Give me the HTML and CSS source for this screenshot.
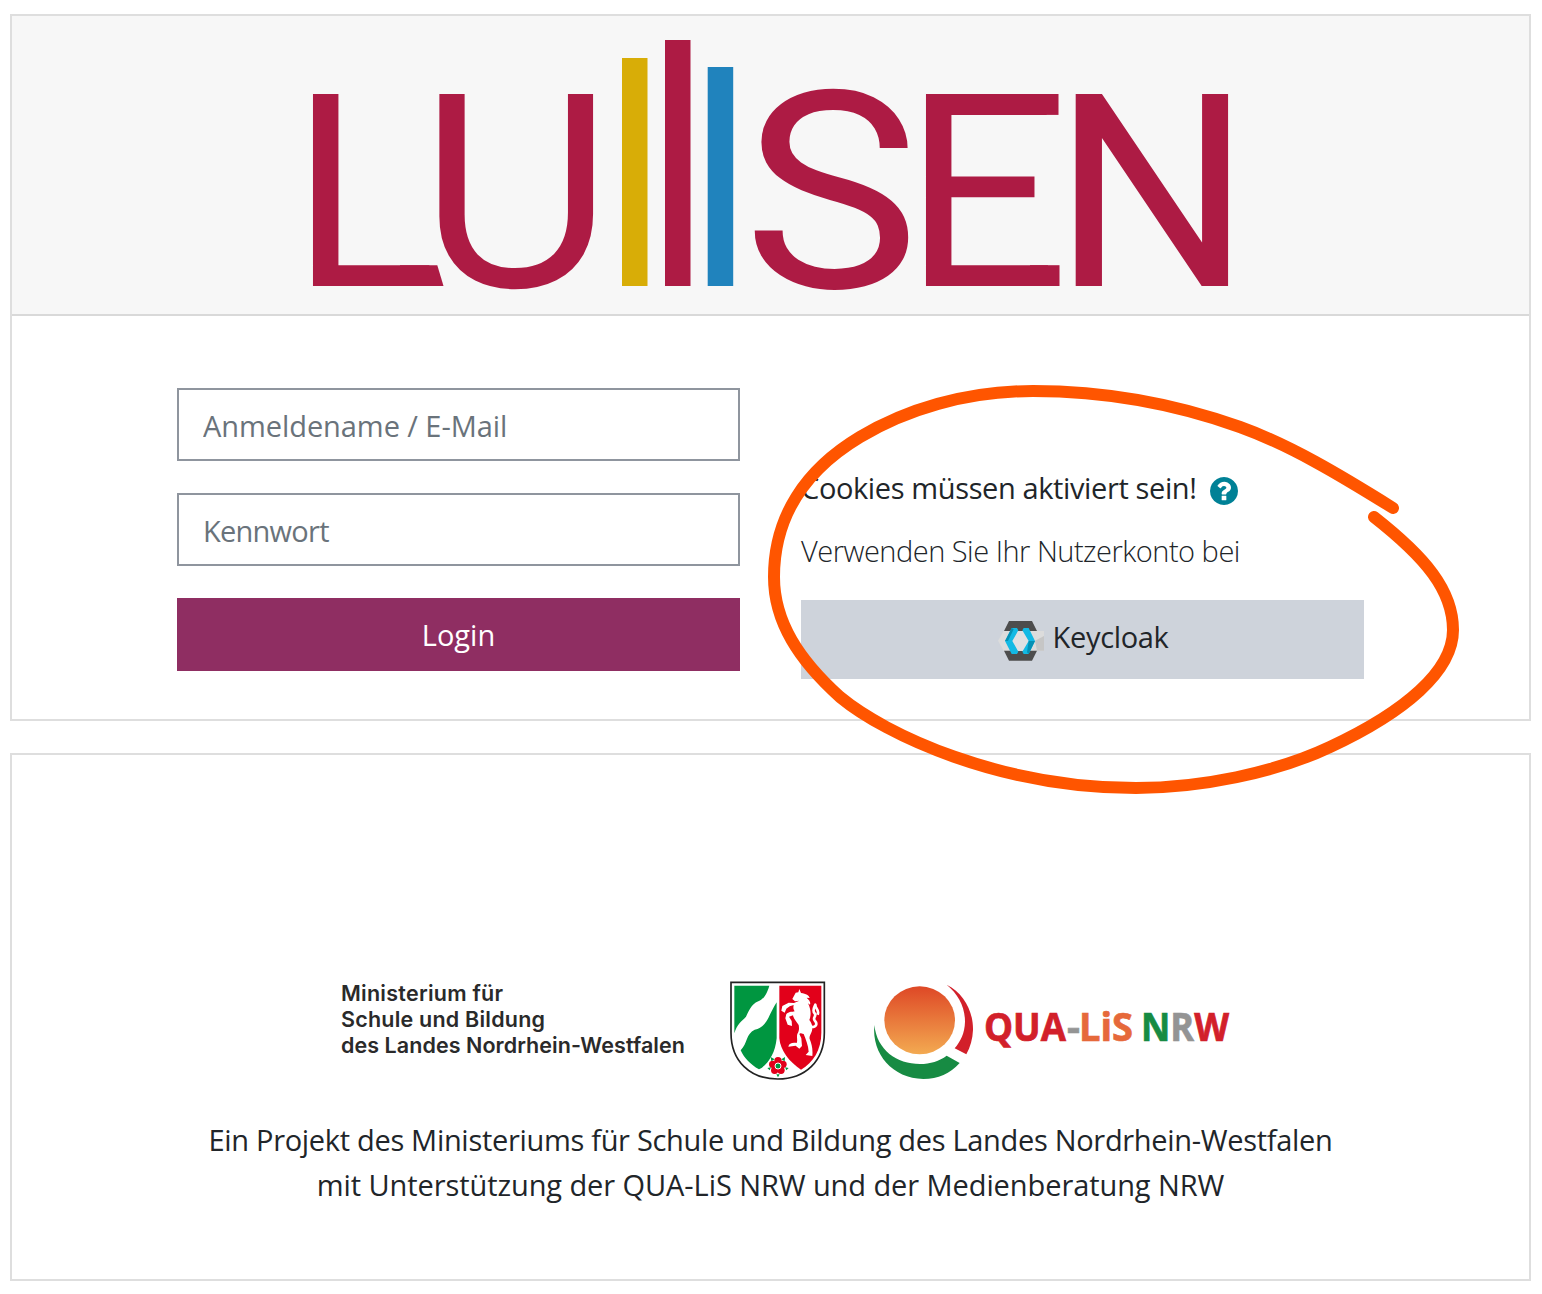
FILE: index.html
```html
<!DOCTYPE html>
<html lang="de">
<head>
<meta charset="utf-8">
<title>LUISEN Login</title>
<link rel="stylesheet" href="styles.css">
</head>
<body>
<main class="page">
  <section class="card login-card">
    <header class="card-header">
      <svg class="brand" viewBox="313 40 915 250" width="915" height="250" role="img" aria-label="Logo">
        <g class="brand-letters">
          <text transform="translate(290.7 286)">L</text>
          <text class="brand-u" transform="translate(418.5 286.500) scale(.97 1.003)">U</text>
          <text transform="translate(743 287.3) scale(1.1 1.02)">S</text>
          <text transform="translate(903.7 286)">E</text>
          <text transform="translate(1052.7 286) scale(1.032 1)">N</text>
        </g>
        <g fill="#ad1b44">
          <polygon points="400,265.2 437.300,265.200 443.5,286 400,286"/>
          <rect x="1030" y="94" width="28.500" height="20.900"/>
          <rect x="1030" y="265.200" width="29.500" height="20.800"/>
        </g>
        <rect x="622" y="58" width="25.5" height="228" fill="#d8ad07"/>
        <rect x="665" y="40" width="25.5" height="246" fill="#ad1b44"/>
        <rect x="707.7" y="67" width="25.5" height="219" fill="#2083bd"/>
      </svg>
    </header>
    <div class="login-body">
      <form class="login-form">
        <input class="field field-user" type="text" placeholder="Anmeldename / E-Mail">
        <input class="field field-pass" type="password" placeholder="Kennwort">
        <button class="btn btn-login" type="button"><span>Login</span></button>
      </form>
      <div class="login-side">
        <p class="cookies"><span class="cookies-text">Cookies müssen aktiviert sein!</span>
          <svg class="help" viewBox="128 128 1536 1536" width="28" height="28"><path d="M1024 1376v-192q0-14-9-23t-23-9h-192q-14 0-23 9t-9 23v192q0 14 9 23t23 9h192q14 0 23-9t9-23zM1280 704q0-88-55.500-163t-138.500-116-170-41q-243 0-371 213-15 24 8 42l132 100q7 6 19 6 16 0 25-12 53-68 86-92 34-24 86-24 48 0 85.500 26t37.500 59q0 38-20 61t-68 45q-63 28-115.500 86.500t-52.500 125.500v36q0 14 9 23t23 9h192q14 0 23-9t9-23q0-19 21.500-49.500t54.500-49.500q32-18 49-28.500t46-35 44.500-48 28-60.500 12.500-81zM1664 896q0 209-103 385.500t-279.500 279.500-385.500 103-385.500-103-279.500-279.500-103-385.500 103-385.500 279.500-279.500 385.500-103 385.500 103 279.500 279.500 103 385.500z"/></svg>
        </p>
        <h2 class="provider-title">Verwenden Sie Ihr Nutzerkonto bei</h2>
        <a class="btn btn-provider" href="#">
          <svg class="keycloak" viewBox="54 60 144 126" width="48" height="42">
            <path fill="#dcdcdc" d="M74 93H195V152H74L57 122Z"/>
            <path fill="#c6c6c6" d="M168 122L195 108V152H174Z"/>
            <path fill="#4d4d4d" d="M90 63H159L174 93H75ZM75 152H174L159 182H90Z"/>
            <path fill="#e0e0e2" d="M116 93H132L150 123 132 153H116L98 123Z"/>
            <path fill="#13b9e4" d="M98 84H114L118 91 100 123 118 155 114 162H98L78 123ZM134 84H149L168 123 149 162H134L130 155 149 123 130 91Z"/>
            <path fill="#0791b4" d="M78 123L98 84 104 88 87 123ZM168 123L149 162 144 157 149 123Z"/>
          </svg>
          <span class="provider-name">Keycloak</span>
        </a>
      </div>
    </div>
  </section>

  <section class="card footer-card">
    <div class="sponsors">
      <svg class="ministry" viewBox="340 980 348 80" width="348" height="80">
        <text x="341" y="1000.500" textLength="162">Ministerium für</text>
        <text x="341" y="1026.500" textLength="204">Schule und Bildung</text>
        <text x="341" y="1052.500" textLength="344">des Landes Nordrhein-Westfalen</text>
      </svg>
      <svg class="arms" viewBox="30 33 288 300" width="96" height="100">
        <path fill="#fff" stroke="#222" stroke-width="5" d="M33 37H313V188C313 274 255 327 173 327S33 274 33 188Z"/>
        <path fill="#009640" d="M43 47H148C140 74 131 87 115 94C92 104 88 122 78 140C65 154 51 162 43 190Z"/>
        <path fill="#009640" d="M170 97V205C166 250 144 284 117 298C91 284 72 263 62 241C83 219 78 191 104 179C143 172 147 130 170 97Z"/>
        <path fill="#e2001a" d="M178 47H304V188C304 238 280 278 243 299C207 276 181 240 178 205Z"/>
        <path fill="#fff" d="M238 57L243 69C258 71 268 77 269 84L260 83C270 92 272 98 270 104L264 100C273 118 274 136 268 150C275 160 279 168 276 182C272 194 267 198 269 207C275 222 279 236 277 258L257 255L266 245C265 226 257 208 251 192C243 190 240 188 238 192L244 205L246 228L238 236L227 227L205 230C207 219 218 217 230 219C234 209 228 199 233 190C237 183 238 176 236 165C231 156 221 148 219 136L207 140L215 153L216 168L203 164L196 145L199 132C210 123 216 127 224 124C219 117 220 111 221 105L209 109L199 116L194 128L184 122L187 108L206 98L222 99L238 92L225 94L217 87L227 68L235 67Z"/>
        <path fill="none" stroke="#fff" stroke-width="8" stroke-linejoin="round" d="M275 171C291 171 292 160 284 151C277 142 291 139 284 130C276 122 282 114 286 104C286 118 299 118 293 134"/>
        <g fill="#e2001a"><circle cx="174" cy="272" r="11"/><circle cx="189" cy="283" r="11"/><circle cx="183" cy="301" r="11"/><circle cx="164" cy="301" r="11"/><circle cx="158" cy="283" r="11"/></g>
        <circle cx="174" cy="288" r="9" fill="#009640" stroke="#fff" stroke-width="3"/>
        <path fill="#009640" d="M152 261L164 268 154 274ZM195 261L184 268 194 274ZM142 294L153 292 149 301ZM206 294L195 292 199 301ZM169 313H179L174 322Z"/>
      </svg>
      <svg class="qualis" viewBox="872 980 358 104" width="358" height="104">
        <defs><linearGradient id="sun" x1="0" y1="0" x2="0" y2="1"><stop offset="0" stop-color="#de4826"/><stop offset="1" stop-color="#f3aa51"/></linearGradient></defs>
        <g transform="translate(860 970) scale(.33333)">
          <ellipse cx="179" cy="151" rx="106" ry="102" fill="url(#sun)"/>
          <path fill="#178b43" d="M43 165C51 240 110 282 180 282C211 282 238 273 260 257L299 279C270 311 235 327 190 327C98 325 35 253 43 165Z"/>
          <path fill="#d2202a" d="M260 44C312 70 340 124 339 180C338 206 331 231 319 253L284 235C302 213 314 190 315 155C315 110 295 73 260 44Z"/>
        </g>
        <g class="qualis-text">
          <text class="red" x="984" y="1041" textLength="82" lengthAdjust="spacingAndGlyphs">QUA</text>
          <text class="grey" x="1067" y="1041" textLength="13" lengthAdjust="spacingAndGlyphs">-</text>
          <text class="orange" x="1079" y="1041" textLength="54" lengthAdjust="spacingAndGlyphs">LiS</text>
          <text x="1141" y="1041" textLength="88" lengthAdjust="spacingAndGlyphs"><tspan class="green">N</tspan><tspan class="grey">R</tspan><tspan class="red">W</tspan></text>
        </g>
      </svg>
    </div>
    <p class="credits"><span class="credit-a">Ein Projekt des Ministeriums für Schule und Bildung des Landes Nordrhein-Westfalen</span><br><span class="credit-b">mit Unterstützung der QUA-LiS NRW und der Medienberatung NRW</span></p>
  </section>
  <svg class="marker" viewBox="0 0 1542 1294" width="1542" height="1294"><path d="M1393 508C1340 475 1290 445 1240 427C1170 402 1100 391 1033 391C965 391 905 410 860 437C805 470 774 517 774 577C774 622 799 660 840 697C886 735 1000 788 1136 788C1200 788 1275 773 1330 747C1405 712 1453 671 1453 630C1453 590 1425 557 1374 517"/></svg>
</main>
</body>
</html>
```
FILE: styles.css
```css
* { box-sizing: border-box; }

body {
  margin: 0;
  background: #fff;
  color: #212529;
  font: 400 29px/45px "Open Sans", "Noto Sans", sans-serif;
}

.page {
  position: relative;
  display: flex;
  flex-direction: column;
  gap: 32px;
  width: 1542px;
  height: 1294px;
  padding: 14px 11px 13px 10px;
  overflow: hidden;
}

.card {
  border: 2px solid #dedede;
  background: #fff;
}

.login-card { height: 707px; }

.card-header {
  display: flex;
  justify-content: center;
  height: 300px;
  padding-top: 24px;
  border-bottom: 2px solid #d9d9d9;
  background: #f7f7f7;
}

.brand { display: block; overflow: visible; }

.brand-letters {
  fill: #ad1b44;
  font: 400 270px Roboto, Arial, sans-serif;
}

.brand-u { font: 279px "Liberation Sans", Arial, sans-serif; }

.login-body {
  display: grid;
  grid-template-columns: 563px 563px;
  column-gap: 61px;
  padding: 72px 0 0 165px;
}

.login-form {
  display: flex;
  flex-direction: column;
  gap: 32px;
}

.field {
  height: 73px;
  padding: 2px 24px 0;
  border: 2px solid #8f959e;
  border-radius: 0;
  background: #fff;
  font: inherit;
}

.field::placeholder { color: #6a737b; opacity: 1; }
.field-user { letter-spacing: -.07px; }
.field-pass { letter-spacing: -.75px; }

.btn {
  display: flex;
  align-items: center;
  justify-content: center;
  border: 0;
  font: inherit;
  text-decoration: none;
}

.btn-login {
  height: 73px;
  padding: 0;
  background: #8f2e62;
  color: #fff;
}

.login-side { padding-top: 78px; }

.cookies {
  display: flex;
  align-items: center;
  gap: 13px;
  height: 45px;
  margin: 0;
  white-space: nowrap;
}

.cookies-text { margin-top: -2px; letter-spacing: -.38px; }
.help { margin-top: 5px; fill: #008196; }

.provider-title {
  height: 36px;
  margin: 22px 0 31px;
  font-size: 29px;
  font-weight: 300;
  line-height: 36px;
  letter-spacing: -.5px;
  white-space: nowrap;
}

.btn-provider {
  gap: 8px;
  height: 79px;
  background: #ced3db;
  color: #212529;
}

.keycloak { margin-top: 3px; }
.provider-name { margin-top: -6px; letter-spacing: -.35px; }

.footer-card {
  height: 528px;
  padding-top: 225px;
}

.sponsors {
  display: flex;
  width: 890px;
  height: 104px;
  margin-left: 328px;
}

.ministry {
  font: 600 21.5px Inter, "Liberation Sans", sans-serif;
  fill: #2a2a2a;
}

.arms { margin: 1px 0 0 42px; }
.qualis { margin-left: 46px; overflow: visible; }

.qualis-text {
  font: 700 38.5px "Open Sans", "Noto Sans", sans-serif;
  stroke-width: .7;
}

.qualis-text text,
.qualis-text tspan { fill: currentColor; stroke: currentColor; }

.red { color: #d2202a; }
.grey { color: #949494; }
.orange { color: #e6693a; }
.green { color: #178b43; }

.credits {
  margin: 33px 0 0;
  text-align: center;
  white-space: nowrap;
}

.credit-a { letter-spacing: -.31px; }
.credit-b { letter-spacing: -.08px; }

.marker {
  position: absolute;
  top: 0;
  left: 0;
  pointer-events: none;
}

.marker path {
  fill: none;
  stroke: #ff5500;
  stroke-width: 12;
  stroke-linecap: round;
}
```
